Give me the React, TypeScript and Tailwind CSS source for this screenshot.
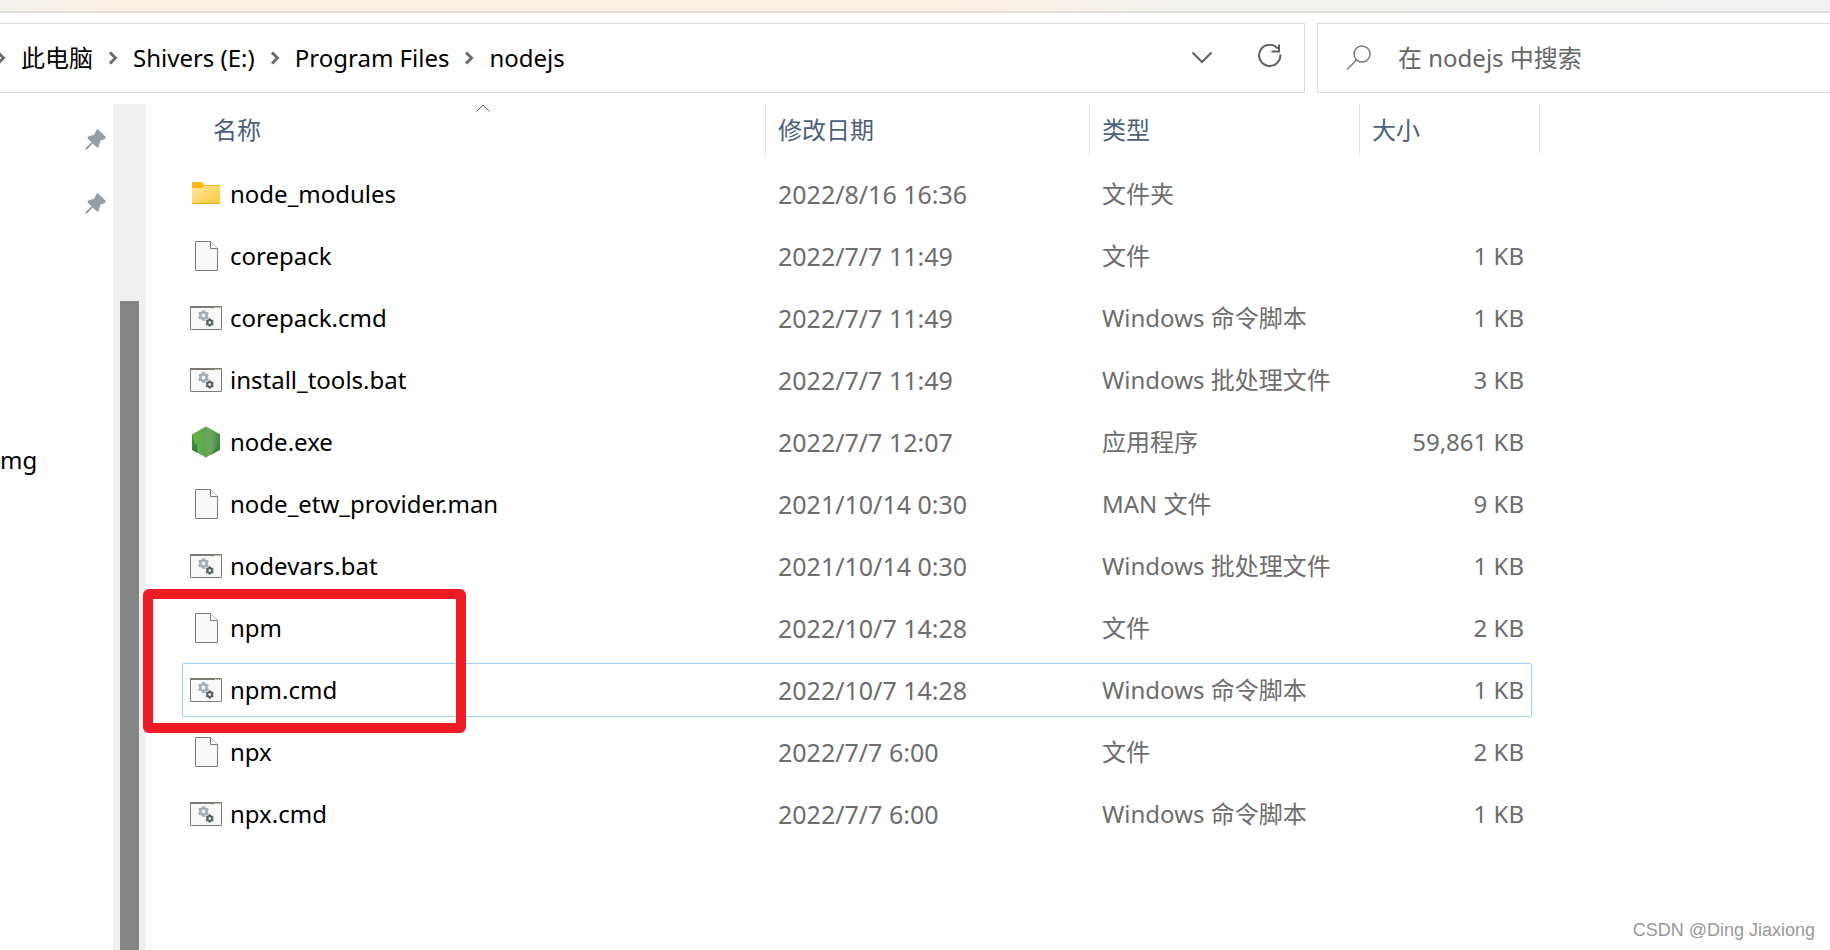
import { useState } from 'react';

type Kind = 'folder' | 'file' | 'script' | 'node';

interface Entry {
  name: string;
  date: string;
  type: string;
  size: string;
  kind: Kind;
}

const entries: Entry[] = [
  { name: 'node_modules', date: '2022/8/16 16:36', type: '文件夹', size: '', kind: 'folder' },
  { name: 'corepack', date: '2022/7/7 11:49', type: '文件', size: '1 KB', kind: 'file' },
  { name: 'corepack.cmd', date: '2022/7/7 11:49', type: 'Windows 命令脚本', size: '1 KB', kind: 'script' },
  { name: 'install_tools.bat', date: '2022/7/7 11:49', type: 'Windows 批处理文件', size: '3 KB', kind: 'script' },
  { name: 'node.exe', date: '2022/7/7 12:07', type: '应用程序', size: '59,861 KB', kind: 'node' },
  { name: 'node_etw_provider.man', date: '2021/10/14 0:30', type: 'MAN 文件', size: '9 KB', kind: 'file' },
  { name: 'nodevars.bat', date: '2021/10/14 0:30', type: 'Windows 批处理文件', size: '1 KB', kind: 'script' },
  { name: 'npm', date: '2022/10/7 14:28', type: '文件', size: '2 KB', kind: 'file' },
  { name: 'npm.cmd', date: '2022/10/7 14:28', type: 'Windows 命令脚本', size: '1 KB', kind: 'script' },
  { name: 'npx', date: '2022/7/7 6:00', type: '文件', size: '2 KB', kind: 'file' },
  { name: 'npx.cmd', date: '2022/7/7 6:00', type: 'Windows 命令脚本', size: '1 KB', kind: 'script' },
];

const crumbs = ['此电脑', 'Shivers (E:)', 'Program Files', 'nodejs'];

// Quick access rows: a pin, a label, or nothing
const navRows = ['pin', 'pin', '', '', '', 'mg'];

const FolderIcon = () => (
  <svg width="32" height="32" viewBox="0 0 32 32">
    <defs>
      <linearGradient id="folder" x1="0" y1="0" x2="1" y2="1">
        <stop offset="0" stopColor="#ffe8a2" />
        <stop offset="1" stopColor="#fdc83a" />
      </linearGradient>
    </defs>
    <path d="M2 5a1 1 0 0 1 1-1h9l2 3h15a1 1 0 0 1 1 1v4H2z" fill="#fbb818" />
    <path d="M2 10h10l2-2h16v17a1 1 0 0 1-1 1H3a1 1 0 0 1-1-1z" fill="url(#folder)" />
    <path d="M2 25h28a1 1 0 0 1-1 1H3a1 1 0 0 1-1-1z" fill="#e9a820" />
  </svg>
);

const FileIcon = () => (
  <svg width="32" height="32" viewBox="0 0 32 32" fill="#f9f9f9" stroke="#7a7a76">
    <path d="M5.500 1.500h15l7 7v22h-22z" />
    <path d="M20.500 1.500v7h7" fill="#fff" />
  </svg>
);

const Gear = ({ x, y, r, color }: { x: number; y: number; r: number; color: string }) => (
  <g transform={`translate(${x} ${y})`} stroke={color} fill="none">
    <circle r={r * 0.58} strokeWidth={r * 0.46} />
    {[0, 60, 120, 180, 240, 300].map((a) => (
      <path key={a} d={`M0 ${-r * 0.7}V${-r}`} strokeWidth={r * 0.45} transform={`rotate(${a})`} />
    ))}
  </g>
);

const ScriptIcon = () => (
  <svg width="32" height="32" viewBox="0 0 32 32">
    <rect x="0.500" y="4.500" width="31" height="23" rx="0.500" fill="#f9f9f9" stroke="#7a7a76" />
    <path d="M0 5h32" stroke="#7a7a70" strokeWidth="2" />
    <path d="M25 5.500h1.500M27.500 5.500h1.500M30 5.500h1" stroke="#e8e8e4" />
    <Gear x={13.5} y={13.5} r={5.5} color="#a3adb6" />
    <Gear x={19.7} y={20.5} r={4.2} color="#545d62" />
  </svg>
);

const NodeIcon = () => (
  <svg width="32" height="32" viewBox="0 0 32 32">
    <defs>
      <linearGradient id="node" x1="0" y1="0" x2="1" y2="0">
        <stop offset="0" stopColor="#68b946" />
        <stop offset="0.450" stopColor="#5fa64d" />
        <stop offset="0.650" stopColor="#72a469" />
        <stop offset="1" stopColor="#3f873f" />
      </linearGradient>
    </defs>
    <path d="M16 0.500l14 7.800v15.500l-14 7.800-14-7.800V8.300z" fill="url(#node)" />
    <path d="M2 8.300l5.500 18.500L2 23.800z" fill="#3f8a43" />
    <path d="M7.500 26.800L2 23.800l5-6.500z" fill="#367f3c" />
    <path d="M8 27l14-23 3 1.600L16 31.500z" fill="#63a657" opacity="0.600" />
    <path d="M30 16v7.800l-9 5z" fill="#3b8840" />
  </svg>
);

const PinIcon = () => (
  <svg width="22" height="22" viewBox="0 0 22 22" fill="#949fa6">
    <path d="M11.500 0.800c0.600-0.600 1.700-0.500 2.300 0.100l6.400 6.300c1 1 0.600 2.300-0.500 2.700l-4.200 1.900-1.900 6c-0.400 1-1.200 1.200-1.900 0.500l-3.900-3.900-5.900 6.200H0.400v-1.500l6.100-5.900-3.700-3.800c-0.700-0.800-0.400-1.600 0.500-1.900l6.100-1.900z" />
  </svg>
);

const CrumbChevron = () => (
  <svg className="shrink-0" width="10" height="14" viewBox="0 0 10 14" fill="none" stroke="#6b6b6b" strokeWidth="3">
    <path d="M2 1.500L7.500 7 2 12.500" />
  </svg>
);

const icons = {
  folder: FolderIcon,
  file: FileIcon,
  script: ScriptIcon,
  node: NodeIcon,
};

const AddressBar = () => (
  <div className="flex h-[70px] gap-3">
    <div className="flex min-w-0 flex-1 items-center border border-l-0 border-[#d9d9d9]">
      <nav aria-label="路径" className="-ml-1 flex flex-1 items-center gap-[15px]">
        {crumbs.map((crumb) => (
          <div key={crumb} className="flex items-center gap-[15px]">
            <CrumbChevron />
            <a href="#" className="whitespace-nowrap text-black">
              {crumb}
            </a>
          </div>
        ))}
      </nav>
      <button aria-label="历史记录" className="mr-11">
        <svg width="22" height="14" viewBox="0 0 22 14" fill="none" stroke="#5f5f5f" strokeWidth="2">
          <path d="M1.500 1.500L11 11l9.500-9.500" />
        </svg>
      </button>
      <button aria-label="刷新" className="mr-[21px]">
        <svg width="26" height="28" viewBox="0 0 26 28" fill="none" stroke="#5f5f5f" strokeWidth="2">
          <path d="M20.800 4.500A10.600 10.600 0 1 0 23.300 10.500" />
          <path d="M22 0.500v7h-7.500" />
        </svg>
      </button>
    </div>
    <label className="flex w-[513px] items-center gap-[26px] border border-r-0 border-[#d9d9d9] pl-7">
      <svg className="shrink-0" width="26" height="26" viewBox="0 0 26 26" fill="none" stroke="#7a7a7a" strokeWidth="1.500">
        <circle cx="16" cy="9" r="8" />
        <path d="M10.500 15L1 24.500" />
      </svg>
      <input
        type="text"
        aria-label="搜索"
        placeholder="在 nodejs 中搜索"
        className="min-w-0 flex-1 outline-none placeholder:text-[#666]"
      />
    </label>
  </div>
);

const NavPane = () => (
  <aside className="flex w-[146px] shrink-0">
    <ul className="flex-1 pt-1">
      {navRows.map((row, i) => (
        <li key={i} className="flex h-16 items-center text-black">
          {row === 'pin' ? (
            <button aria-label="取消固定" className="ml-auto mr-1.5">
              <PinIcon />
            </button>
          ) : (
            row
          )}
        </li>
      ))}
    </ul>
    {/* Scrollbar */}
    <div className="flex w-[33px] flex-col items-center bg-[#f0f0f0] pt-[197px]">
      <div className="w-[19px] flex-1 bg-[#858585]" />
    </div>
  </aside>
);

const FileList = () => {
  const [selected, setSelected] = useState('npm.cmd');
  const head = 'relative block h-[51px] w-full border-r border-[#e5e5e5] text-left text-[#4c607a]';

  return (
    <table className="w-full table-fixed border-separate border-spacing-x-0 border-spacing-y-2 text-[#6d6d6d]">
      <colgroup>
        <col className="w-[584px]" />
        <col className="w-[324px]" />
        <col className="w-[270px]" />
        <col className="w-[172px]" />
        <col className="w-2" />
        <col />
      </colgroup>
      <thead>
        <tr>
          <th className="pb-1 pl-5 font-normal">
            <button className={`${head} pl-[11px]`}>
              名称
              <svg className="absolute left-1/2 top-0 -ml-2" width="14" height="8" viewBox="0 0 14 8" fill="none" stroke="#5f5f5f">
                <path d="M0.500 7.500L7 1l6.500 6.500" />
              </svg>
            </button>
          </th>
          <th className="pb-1 font-normal">
            <button className={`${head} pl-3`}>修改日期</button>
          </th>
          <th className="pb-1 font-normal">
            <button className={`${head} pl-3`}>类型</button>
          </th>
          <th colSpan={2} className="pb-1 font-normal">
            <button className={`${head} pl-3`}>大小</button>
          </th>
        </tr>
      </thead>
      <tbody>
        {entries.map((entry) => {
          const Icon = icons[entry.kind];
          const edge = entry.name === selected ? 'border-[#99d1ff]' : 'border-transparent';
          return (
            <tr key={entry.name} onClick={() => setSelected(entry.name)}>
              <td className={`h-[54px] rounded-l-xs border-y border-l pl-[7px] ${edge}`}>
                <div className="flex items-center gap-2">
                  <Icon />
                  <span className="text-black">{entry.name}</span>
                </div>
              </td>
              <td className={`border-y pl-3 text-[25px] ${edge}`}>{entry.date}</td>
              <td className={`border-y pl-3 ${edge}`}>{entry.type}</td>
              <td className={`rounded-r-xs border-y border-r pr-[7px] text-right ${edge}`}>{entry.size}</td>
            </tr>
          );
        })}
      </tbody>
    </table>
  );
};

export default function App() {
  return (
    <div className="relative flex min-h-screen flex-col overflow-hidden bg-white font-['Noto_Sans','Noto_Sans_CJK_SC',sans-serif] text-[24px] leading-8">
      {/* Bottom edge of the toolbar, tinted by the wallpaper */}
      <div className="mb-2.5 bg-[linear-gradient(to_right,#f4f2ee,#faf0e6_6%,#faf0e6_53%,#f3f2ee_64%,#f2f2f2)]">
        <div className="h-[13px] border-b-2 border-black/8" />
      </div>
      <AddressBar />
      <div className="flex flex-1 pt-[11px]">
        <NavPane />
        <main className="relative ml-[3px] min-w-0 flex-1 border-l-2 border-[#f7f7f7] pl-[31px]">
          <div className="-mt-2">
            <FileList />
          </div>
          {/* Highlight around npm and npm.cmd */}
          <div className="pointer-events-none absolute -left-2 top-[485px] h-[144px] w-[323px] rounded-md border-10 border-[#ed1c24]" />
        </main>
      </div>
      <p className="absolute bottom-1 right-[15px] font-['Liberation_Sans',sans-serif] text-[18px] text-[#999]">
        CSDN @Ding Jiaxiong
      </p>
    </div>
  );
}
